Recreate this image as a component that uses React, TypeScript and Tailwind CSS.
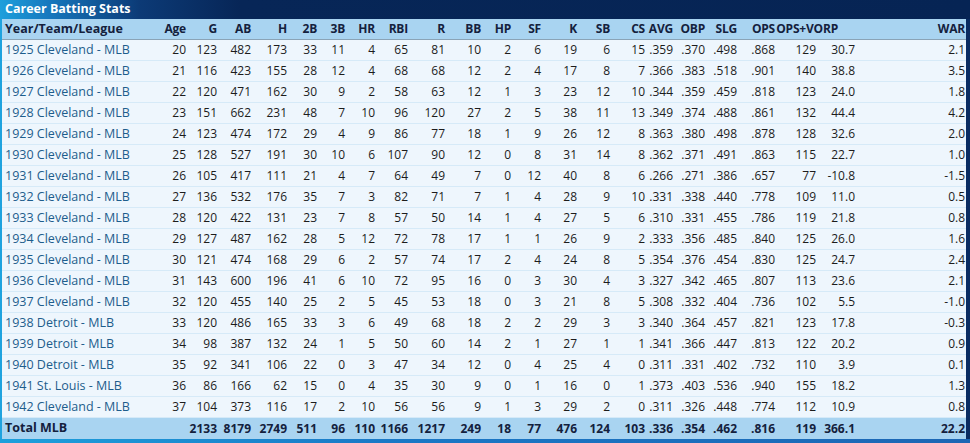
const rows: (string | number)[][] = [
  ["1925 Cleveland - MLB", 20, 123, 482, 173, 33, 11, 4, 65, 81, 10, 2, 6, 19, 6, 15, ".359", ".370", ".498", ".868", 129, "30.7", "2.1"],
  ["1926 Cleveland - MLB", 21, 116, 423, 155, 28, 12, 4, 68, 68, 12, 2, 4, 17, 8, 7, ".366", ".383", ".518", ".901", 140, "38.8", "3.5"],
  ["1927 Cleveland - MLB", 22, 120, 471, 162, 30, 9, 2, 58, 63, 12, 1, 3, 23, 12, 10, ".344", ".359", ".459", ".818", 123, "24.0", "1.8"],
  ["1928 Cleveland - MLB", 23, 151, 662, 231, 48, 7, 10, 96, 120, 27, 2, 5, 38, 11, 13, ".349", ".374", ".488", ".861", 132, "44.4", "4.2"],
  ["1929 Cleveland - MLB", 24, 123, 474, 172, 29, 4, 9, 86, 77, 18, 1, 9, 26, 12, 8, ".363", ".380", ".498", ".878", 128, "32.6", "2.0"],
  ["1930 Cleveland - MLB", 25, 128, 527, 191, 30, 10, 6, 107, 90, 12, 0, 8, 31, 14, 8, ".362", ".371", ".491", ".863", 115, "22.7", "1.0"],
  ["1931 Cleveland - MLB", 26, 105, 417, 111, 21, 4, 7, 64, 49, 7, 0, 12, 40, 8, 6, ".266", ".271", ".386", ".657", 77, "-10.8", "-1.5"],
  ["1932 Cleveland - MLB", 27, 136, 532, 176, 35, 7, 3, 82, 71, 7, 1, 4, 28, 9, 10, ".331", ".338", ".440", ".778", 109, "11.0", "0.5"],
  ["1933 Cleveland - MLB", 28, 120, 422, 131, 23, 7, 8, 57, 50, 14, 1, 4, 27, 5, 6, ".310", ".331", ".455", ".786", 119, "21.8", "0.8"],
  ["1934 Cleveland - MLB", 29, 127, 487, 162, 28, 5, 12, 72, 78, 17, 1, 1, 26, 9, 2, ".333", ".356", ".485", ".840", 125, "26.0", "1.6"],
  ["1935 Cleveland - MLB", 30, 121, 474, 168, 29, 6, 2, 57, 74, 17, 2, 4, 24, 8, 5, ".354", ".376", ".454", ".830", 125, "24.7", "2.4"],
  ["1936 Cleveland - MLB", 31, 143, 600, 196, 41, 6, 10, 72, 95, 16, 0, 3, 30, 4, 3, ".327", ".342", ".465", ".807", 113, "23.6", "2.1"],
  ["1937 Cleveland - MLB", 32, 120, 455, 140, 25, 2, 5, 45, 53, 18, 0, 3, 21, 8, 5, ".308", ".332", ".404", ".736", 102, "5.5", "-1.0"],
  ["1938 Detroit - MLB", 33, 120, 486, 165, 33, 3, 6, 49, 68, 18, 2, 2, 29, 3, 3, ".340", ".364", ".457", ".821", 123, "17.8", "-0.3"],
  ["1939 Detroit - MLB", 34, 98, 387, 132, 24, 1, 5, 50, 60, 14, 2, 1, 27, 1, 1, ".341", ".366", ".447", ".813", 122, "20.2", "0.9"],
  ["1940 Detroit - MLB", 35, 92, 341, 106, 22, 0, 3, 47, 34, 12, 0, 4, 25, 4, 0, ".311", ".331", ".402", ".732", 110, "3.9", "0.1"],
  ["1941 St. Louis - MLB", 36, 86, 166, 62, 15, 0, 4, 35, 30, 9, 0, 1, 16, 0, 1, ".373", ".403", ".536", ".940", 155, "18.2", "1.3"],
  ["1942 Cleveland - MLB", 37, 104, 373, 116, 17, 2, 10, 56, 56, 9, 1, 3, 29, 2, 0, ".311", ".326", ".448", ".774", 112, "10.9", "0.8"],
];

const total = ["Total MLB", "", 2133, 8179, 2749, 511, 96, 110, 1166, 1217, 249, 18, 77, 476, 124, 103, ".336", ".354", ".462", ".816", 119, "366.1", "22.2"];

const headers = ["Year/Team/League", "Age", "G", "AB", "H", "2B", "3B", "HR", "RBI", "R", "BB", "HP", "SF", "K", "SB", "CS", "AVG", "OBP", "SLG", "OPS", "OPS+", "VORP", "WAR"];

// header labels that sit left of their value column
const headerPad: Record<string, string> = {
  "OPS+": "pr-[10px]",
  VORP: "pr-[17px]",
};

const grid =
  "grid grid-cols-[148px_36px_31px_34px_36px_30px_28px_30px_33px_37px_36px_30px_30px_36px_33px_35px_28px_32px_32px_38px_41px_39px_110px]";

export default function App() {
  return (
    <div className="w-[970px] h-[443px] flex flex-col overflow-hidden bg-[linear-gradient(90deg,#1fa3df_0px,#1676bd_90px,#0d3e7d_260px,#0a2c62_100%)] font-['Open_Sans',sans-serif] text-[12px] leading-none">
      {/* Title bar */}
      <div className="h-[19px] flex items-center pl-[5px] bg-[linear-gradient(90deg,#1e9fdc_0px,#1677bd_50px,#0c3a76_140px,#072657_240px,#062454_100%)]">
        <span className="text-white font-bold text-[12.5px]">Career Batting Stats</span>
      </div>

      {/* Table */}
      <div className="ml-[2px] mr-[4px] flex flex-col bg-[#eef6fd]">
        <div className={`${grid} h-[21px] items-center bg-[#a9d4f1] border-b border-[#8aa3b6] text-[#14213d] font-bold`}>
          {headers.map((h, i) =>
            i === 0 ? (
              <div key={h} className="pl-[3px] text-[12.5px]">{h}</div>
            ) : (
              <div key={h} className={`flex justify-end whitespace-nowrap tracking-[-0.2px] ${headerPad[h] ?? ""}`}>
                <span>{h}</span>
              </div>
            )
          )}
        </div>

        {rows.map((r, ri) => (
          <div key={ri} className={`${grid} h-[21px] items-center border-b border-[#d6eaf8]`}>
            {r.map((v, i) =>
              i === 0 ? (
                <div key={i} className="pl-[3px] text-[12.5px] text-[#1d5d8c] whitespace-nowrap">{v}</div>
              ) : (
                <div key={i} className="text-right text-[#1c1c1c] whitespace-nowrap">{v}</div>
              )
            )}
          </div>
        ))}

        <div className={`${grid} h-[21px] items-center bg-[#a9d4f1] text-[#14213d] font-bold`}>
          {total.map((v, i) =>
            i === 0 ? (
              <div key={i} className="pl-[3px] text-[12.5px]">{v}</div>
            ) : (
              <div key={i} className="text-right whitespace-nowrap">{v}</div>
            )
          )}
        </div>
      </div>

      {/* bottom frame edge */}
      <div className="flex-1 bg-[linear-gradient(90deg,#1da0dc,#1a78c6_40%,#1c66b4)]" />
    </div>
  );
}
